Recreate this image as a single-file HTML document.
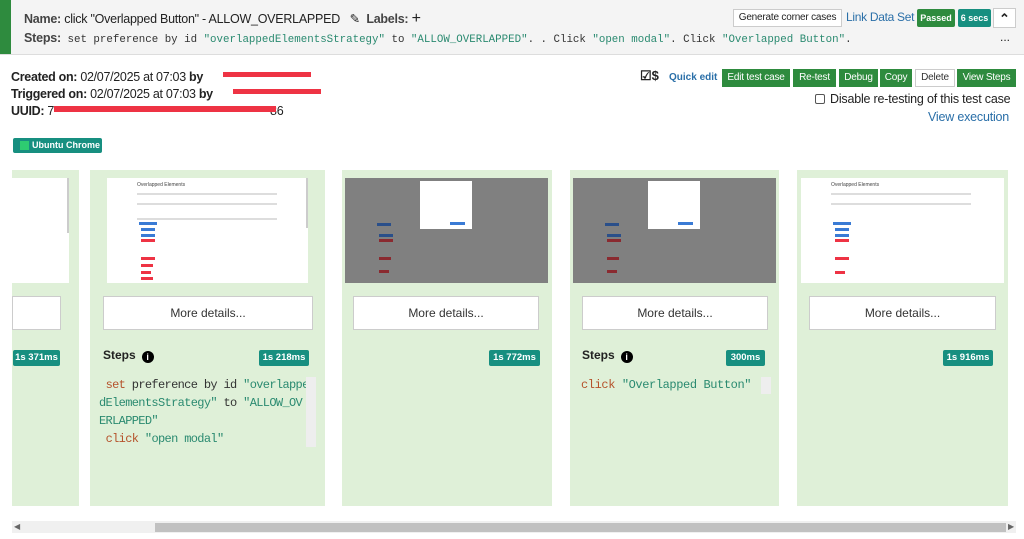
<!DOCTYPE html>
<html><head><meta charset="utf-8"><style>
*{box-sizing:border-box;margin:0;padding:0}
body{width:1024px;height:539px;overflow:hidden;background:#fff;font-family:"Liberation Sans",sans-serif;color:#222;position:relative;font-size:13px}
.a{position:absolute;white-space:nowrap}
.mono{font-family:"Liberation Mono",monospace}
.btn{position:absolute;top:69px;height:18px;background:#2e8b3e;color:#fff;font-size:10px;line-height:18px;text-align:center;letter-spacing:-0.2px}
.card{position:absolute;top:170px;height:336px;background:#dff0d8}
.shot{position:absolute;top:8px;height:105px;background:#fff;overflow:hidden}
.more{position:absolute;top:126px;height:34px;background:#fff;border:1px solid #ccc;font-size:12px;text-align:center;line-height:32px;color:#333}
.tm{position:absolute;top:180px;height:16px;background:#178f80;color:#fff;font-size:9.5px;font-weight:bold;line-height:16px;text-align:center;border-radius:2px;white-space:nowrap}
.steps{position:absolute;top:178px;font-weight:bold;font-size:12px}
.info{display:inline-block;width:12px;height:12px;border-radius:50%;background:#000;color:#fff;font-size:9px;text-align:center;line-height:12px;margin-left:6px;vertical-align:-1px}
.code{position:absolute;font-size:11.5px;line-height:18px;color:#333}
.r{color:#b5522b}.g{color:#2a8a70}
.sl{position:absolute;height:2px;background:#ddd}
.rb{background:#e34;height:2px;position:absolute}
.bb{background:#3a7bd5;height:3px;position:absolute}
</style></head><body>
<div class="a" style="left:0;top:0;width:1024px;height:55px;background:#f4f4f4;border-bottom:1px solid #ddd"></div>
<div class="a" style="left:0;top:0;width:11px;height:54px;background:#2e8b3e"></div>
<div class="a" style="left:24px;top:10px;font-size:12.5px;letter-spacing:-0.25px"><b style="color:#444">Name:</b> click "Overlapped Button" - ALLOW_OVERLAPPED &nbsp;&nbsp;<span>&#9998;</span>&nbsp; <b style="color:#444">Labels:</b> <span style="font-size:16px">+</span></div>
<div class="a mono" style="left:24px;top:31px;font-size:10.8px"><b style="font-family:'Liberation Sans';font-size:12.5px;color:#444;letter-spacing:-0.2px">Steps:</b> <span style="color:#333">set preference by id <span class="g">"overlappedElementsStrategy"</span> to <span class="g">"ALLOW_OVERLAPPED"</span>. . Click <span class="g">"open modal"</span>. Click <span class="g">"Overlapped Button"</span>.</span></div>
<div class="a" style="left:1000px;top:30px;font-size:12px">...</div>
<div class="a" style="left:733px;top:9px;width:109px;height:18px;background:#fff;border:1px solid #ccc;font-size:10px;line-height:16px;text-align:center;letter-spacing:-0.2px">Generate corner cases</div>
<div class="a" style="left:846px;top:10px;color:#2a6fa8;font-size:12px;letter-spacing:-0.3px">Link Data Set</div>
<div class="a" style="left:917px;top:9px;width:38px;height:18px;background:#2e8b3e;color:#fff;font-size:9px;font-weight:bold;line-height:18px;text-align:center;border-radius:2px">Passed</div>
<div class="a" style="left:958px;top:9px;width:33px;height:18px;background:#178f80;color:#fff;font-size:9px;font-weight:bold;line-height:18px;text-align:center;border-radius:2px">6 secs</div>
<div class="a" style="left:993px;top:8px;width:23px;height:20px;background:#fff;border:1px solid #ccc;text-align:center;font-weight:bold;font-size:13px;line-height:20px">&#8963;</div>

<div class="a" style="left:11px;top:69px;font-size:12.5px;line-height:17px;letter-spacing:-0.3px"><b>Created on:</b> 02/07/2025 at 07:03 <b>by</b><br><b>Triggered on:</b> 02/07/2025 at 07:03 <b>by</b><br><b>UUID:</b> 7<span style="margin-left:216px">86</span></div>
<div class="rb" style="left:223px;top:72px;width:88px;height:5px"></div>
<div class="rb" style="left:233px;top:89px;width:88px;height:5px"></div>
<div class="rb" style="left:54px;top:106px;width:222px;height:6px"></div>
<div class="a" style="left:13px;top:138px;width:89px;height:15px;background:#178f80;border-radius:2px;color:#fff;font-size:9px;font-weight:bold;line-height:15px;padding-left:19px">Ubuntu Chrome</div>
<div class="a" style="left:20px;top:141px;width:9px;height:9px;background:#2ecc71"></div>

<div class="a" style="left:640px;top:68px;font-size:13px;font-weight:bold">&#9745;$</div>
<div class="a" style="left:669px;top:72px;color:#2a6fa8;font-size:10px;font-weight:bold">Quick edit</div>
<div class="btn" style="left:722px;width:68px">Edit test case</div>
<div class="btn" style="left:793px;width:43px">Re-test</div>
<div class="btn" style="left:839px;width:39px">Debug</div>
<div class="btn" style="left:880px;width:32px">Copy</div>
<div class="btn" style="left:915px;width:40px;background:#fff;color:#333;border:1px solid #ccc;line-height:16px">Delete</div>
<div class="btn" style="left:957px;width:59px">View Steps</div>
<div class="a" style="left:815px;top:94px;width:10px;height:10px;border:1px solid #555;border-radius:2px"></div>
<div class="a" style="left:830px;top:92px;font-size:12.5px;letter-spacing:-0.2px">Disable re-testing of this test case</div>
<div class="a" style="left:928px;top:110px;font-size:12.5px;color:#2a6fa8;letter-spacing:-0.2px">View execution</div>

<div class="card" style="left:12px;width:67px"><div class="shot" style="left:0;width:57px"></div><div class="a" style="left:55px;top:8px;width:2px;height:55px;background:#ccc"></div><div class="more" style="left:0;width:49px"></div><div class="tm" style="left:1px;width:47px">1s 371ms</div></div>
<div class="card" style="left:90px;width:235px">
<div class="shot" style="left:17px;width:201px"><div class="a" style="left:30px;top:4px;font-size:5px;color:#444">Overlapped Elements</div><div class="sl" style="left:30px;top:15px;width:140px"></div><div class="sl" style="left:30px;top:25px;width:140px"></div><div class="sl" style="left:30px;top:40px;width:140px"></div><div class="bb" style="left:32px;top:44px;width:18px"></div><div class="bb" style="left:34px;top:50px;width:14px"></div><div class="bb" style="left:34px;top:56px;width:14px"></div><div class="rb" style="left:34px;top:61px;width:14px;height:3px"></div><div class="rb" style="left:34px;top:79px;width:14px;height:3px"></div><div class="rb" style="left:34px;top:86px;width:12px;height:3px"></div><div class="rb" style="left:34px;top:93px;width:10px;height:3px"></div><div class="rb" style="left:34px;top:99px;width:12px;height:3px"></div><div class="a" style="left:199px;top:0;width:2px;height:50px;background:#ccc"></div></div>
<div class="more" style="left:13px;width:210px">More details...</div>
<div class="steps" style="left:13px">Steps<span class="info">i</span></div>
<div class="tm" style="left:169px;width:50px">1s 218ms</div>
<div class="code mono" style="left:9px;top:206px;font-size:12px;white-space:pre;letter-spacing:-0.65px"> <span class="r">set</span> preference by id <span class="g">"overlappe
dElementsStrategy"</span> to <span class="g">"ALLOW_OV
ERLAPPED"</span>
 <span class="r">click</span> <span class="g">"open modal"</span></div>
<div class="a" style="left:216px;top:207px;width:10px;height:70px;background:#eee"></div>
</div>
<div class="card" style="left:342px;width:210px">
<div class="shot" style="left:3px;width:203px;background:#808080"><div class="a" style="left:75px;top:3px;width:52px;height:48px;background:#fff"></div><div class="a" style="left:105px;top:44px;width:15px;height:3px;background:#3a7bd5"></div><div class="bb" style="left:32px;top:45px;width:14px;background:#2a4f8a"></div><div class="bb" style="left:34px;top:56px;width:14px;background:#2a4f8a"></div><div class="rb" style="left:34px;top:61px;width:14px;height:3px;background:#8a2a30"></div><div class="rb" style="left:34px;top:79px;width:12px;height:3px;background:#8a2a30"></div><div class="rb" style="left:34px;top:92px;width:10px;height:3px;background:#8a2a30"></div></div>
<div class="more" style="left:11px;width:186px">More details...</div>
<div class="tm" style="left:147px;width:51px">1s 772ms</div>
</div>
<div class="card" style="left:570px;width:209px">
<div class="shot" style="left:3px;width:203px;background:#808080"><div class="a" style="left:75px;top:3px;width:52px;height:48px;background:#fff"></div><div class="a" style="left:105px;top:44px;width:15px;height:3px;background:#3a7bd5"></div><div class="bb" style="left:32px;top:45px;width:14px;background:#2a4f8a"></div><div class="bb" style="left:34px;top:56px;width:14px;background:#2a4f8a"></div><div class="rb" style="left:34px;top:61px;width:14px;height:3px;background:#8a2a30"></div><div class="rb" style="left:34px;top:79px;width:12px;height:3px;background:#8a2a30"></div><div class="rb" style="left:34px;top:92px;width:10px;height:3px;background:#8a2a30"></div></div>
<div class="more" style="left:12px;width:186px">More details...</div>
<div class="steps" style="left:12px">Steps<span class="info">i</span></div>
<div class="tm" style="left:156px;width:39px">300ms</div>
<div class="code mono" style="left:11px;top:206px;font-size:12px;letter-spacing:-0.4px;white-space:pre"><span class="r">click</span> <span class="g">"Overlapped Button"</span></div>
<div class="a" style="left:191px;top:207px;width:10px;height:17px;background:#eee"></div>
</div>
<div class="card" style="left:797px;width:211px">
<div class="shot" style="left:4px;width:203px"><div class="a" style="left:30px;top:4px;font-size:5px;color:#444">Overlapped Elements</div><div class="sl" style="left:30px;top:15px;width:140px"></div><div class="sl" style="left:30px;top:25px;width:140px"></div><div class="bb" style="left:32px;top:44px;width:18px"></div><div class="bb" style="left:34px;top:50px;width:14px"></div><div class="bb" style="left:34px;top:56px;width:14px"></div><div class="rb" style="left:34px;top:61px;width:14px;height:3px"></div><div class="rb" style="left:34px;top:79px;width:14px;height:3px"></div><div class="rb" style="left:34px;top:93px;width:10px;height:3px"></div></div>
<div class="more" style="left:12px;width:187px">More details...</div>
<div class="tm" style="left:146px;width:50px">1s 916ms</div>
</div>

<div class="a" style="left:12px;top:521px;width:1004px;height:12px;background:#f0f0f0"></div>
<div class="a" style="left:155px;top:523px;width:851px;height:9px;background:#c1c1c1"></div>
<div class="a" style="left:14px;top:522px;font-size:8px;color:#666">&#9664;</div>
<div class="a" style="left:1008px;top:522px;font-size:8px;color:#666">&#9654;</div>
</body></html>
